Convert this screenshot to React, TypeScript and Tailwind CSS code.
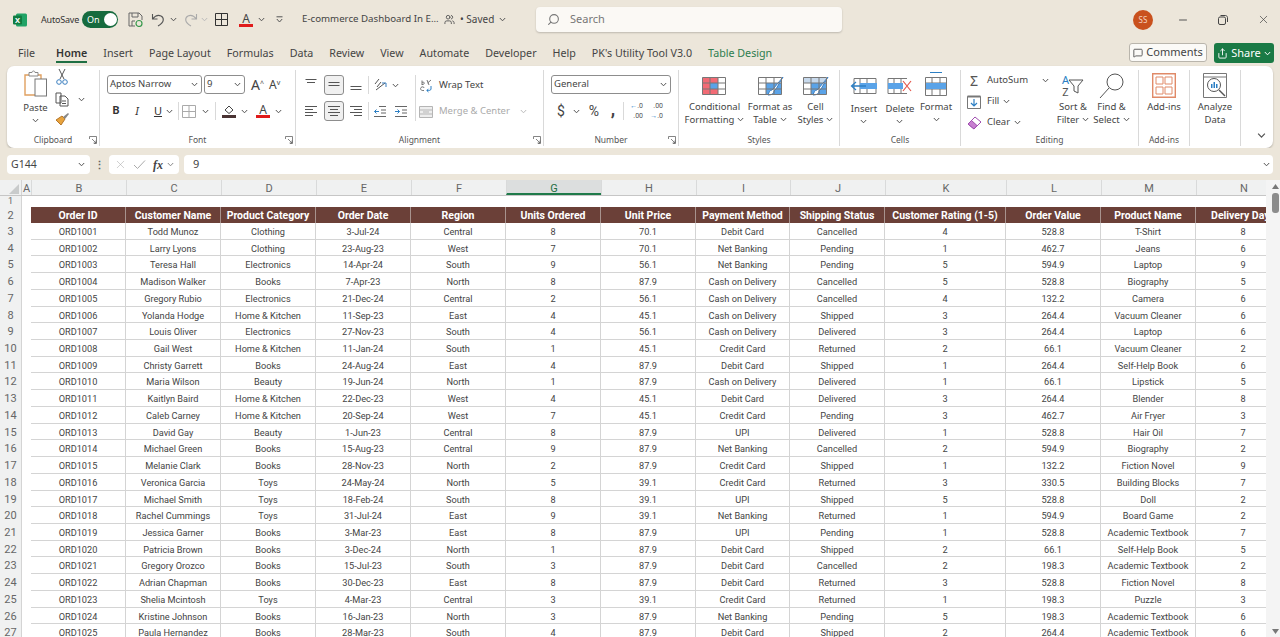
import React from 'react';
import { MessageSquare, Minus, Search, Share, X, Users } from 'lucide-react';

const ui = { fontFamily: '"Noto Sans", sans-serif' };
const sheetFont = { fontFamily: 'Roboto, sans-serif' };

const columns = [
  { name: 'B', title: 'Order ID', w: 'w-[95px]' },
  { name: 'C', title: 'Customer Name', w: 'w-[95px]' },
  { name: 'D', title: 'Product Category', w: 'w-[95px]' },
  { name: 'E', title: 'Order Date', w: 'w-[95px]' },
  { name: 'F', title: 'Region', w: 'w-[95px]' },
  { name: 'G', title: 'Units Ordered', w: 'w-[95px]' },
  { name: 'H', title: 'Unit Price', w: 'w-[95px]' },
  { name: 'I', title: 'Payment Method', w: 'w-[94px]' },
  { name: 'J', title: 'Shipping Status', w: 'w-[95px]' },
  { name: 'K', title: 'Customer Rating (1-5)', w: 'w-[121px]' },
  { name: 'L', title: 'Order Value', w: 'w-[95px]' },
  { name: 'M', title: 'Product Name', w: 'w-[95px]' },
  { name: 'N', title: 'Delivery Days', w: 'w-[95px]' },
];

const rows = [
  'ORD1001|Todd Munoz|Clothing|3-Jul-24|Central|8|70.1|Debit Card|Cancelled|4|528.8|T-Shirt|8',
  'ORD1002|Larry Lyons|Clothing|23-Aug-23|West|7|70.1|Net Banking|Pending|1|462.7|Jeans|6',
  'ORD1003|Teresa Hall|Electronics|14-Apr-24|South|9|56.1|Net Banking|Pending|5|594.9|Laptop|9',
  'ORD1004|Madison Walker|Books|7-Apr-23|North|8|87.9|Cash on Delivery|Cancelled|5|528.8|Biography|5',
  'ORD1005|Gregory Rubio|Electronics|21-Dec-24|Central|2|56.1|Cash on Delivery|Cancelled|4|132.2|Camera|6',
  'ORD1006|Yolanda Hodge|Home & Kitchen|11-Sep-23|East|4|45.1|Cash on Delivery|Shipped|3|264.4|Vacuum Cleaner|6',
  'ORD1007|Louis Oliver|Electronics|27-Nov-23|South|4|56.1|Cash on Delivery|Delivered|3|264.4|Laptop|6',
  'ORD1008|Gail West|Home & Kitchen|11-Jan-24|South|1|45.1|Credit Card|Returned|2|66.1|Vacuum Cleaner|2',
  'ORD1009|Christy Garrett|Books|24-Aug-24|East|4|87.9|Debit Card|Shipped|1|264.4|Self-Help Book|6',
  'ORD1010|Maria Wilson|Beauty|19-Jun-24|North|1|87.9|Cash on Delivery|Delivered|1|66.1|Lipstick|5',
  'ORD1011|Kaitlyn Baird|Home & Kitchen|22-Dec-23|West|4|45.1|Debit Card|Delivered|3|264.4|Blender|8',
  'ORD1012|Caleb Carney|Home & Kitchen|20-Sep-24|West|7|45.1|Credit Card|Pending|3|462.7|Air Fryer|3',
  'ORD1013|David Gay|Beauty|1-Jun-23|Central|8|87.9|UPI|Delivered|1|528.8|Hair Oil|7',
  'ORD1014|Michael Green|Books|15-Aug-23|Central|9|87.9|Net Banking|Cancelled|2|594.9|Biography|2',
  'ORD1015|Melanie Clark|Books|28-Nov-23|North|2|87.9|Credit Card|Shipped|1|132.2|Fiction Novel|9',
  'ORD1016|Veronica Garcia|Toys|24-May-24|North|5|39.1|Credit Card|Returned|3|330.5|Building Blocks|7',
  'ORD1017|Michael Smith|Toys|18-Feb-24|South|8|39.1|UPI|Shipped|5|528.8|Doll|2',
  'ORD1018|Rachel Cummings|Toys|31-Jul-24|East|9|39.1|Net Banking|Returned|1|594.9|Board Game|2',
  'ORD1019|Jessica Garner|Books|3-Mar-23|East|8|87.9|UPI|Pending|1|528.8|Academic Textbook|7',
  'ORD1020|Patricia Brown|Books|3-Dec-24|North|1|87.9|Debit Card|Shipped|2|66.1|Self-Help Book|5',
  'ORD1021|Gregory Orozco|Books|15-Jul-23|South|3|87.9|Debit Card|Cancelled|2|198.3|Academic Textbook|2',
  'ORD1022|Adrian Chapman|Books|30-Dec-23|East|8|87.9|Debit Card|Returned|3|528.8|Fiction Novel|8',
  'ORD1023|Shelia Mcintosh|Toys|4-Mar-23|Central|3|39.1|Credit Card|Returned|1|198.3|Puzzle|3',
  'ORD1024|Kristine Johnson|Books|16-Jan-23|North|3|87.9|Net Banking|Pending|5|198.3|Academic Textbook|6',
  'ORD1025|Paula Hernandez|Books|28-Mar-23|South|4|87.9|Debit Card|Shipped|2|264.4|Academic Textbook|6',
].map((r) => r.split('|'));

const tabs = ['File', 'Home', 'Insert', 'Page Layout', 'Formulas', 'Data', 'Review', 'View', 'Automate', 'Developer', 'Help', "PK's Utility Tool V3.0", 'Table Design'];

const Chev = ({ color = '#555', className = '' }: { color?: string; className?: string }) => (
  <svg width="7" height="5" viewBox="0 0 7 5" className={'shrink-0 ' + className}>
    <path d="M.8 1 3.5 3.8 6.2 1" fill="none" stroke={color} strokeWidth="1" />
  </svg>
);

// stacked text lines, used for the alignment buttons
const Lines = ({ widths, align = 'left', top = 1 }: { widths: number[]; align?: string; top?: number }) => (
  <svg width="14" height="14" viewBox="0 0 14 14">
    {widths.map((w, i) => {
      const x = align === 'left' ? 1 : align === 'right' ? 13 - w : 7 - w / 2;
      return <rect key={i} x={x} y={top + i * 3} width={w} height="1" fill="#555" />;
    })}
  </svg>
);

const Launcher = () => (
  <svg width="8" height="8" viewBox="0 0 8 8" className="absolute right-[2px] bottom-[2px]">
    <path d="M.5 3V.5H7.5V7.5H5M3 3 7 7M7 4.5V7H4.5" fill="none" stroke="#666" strokeWidth=".8" />
  </svg>
);

const Group = ({ w, label, launcher, border = true, children }: { w: string; label?: string; launcher?: boolean; border?: boolean; children: React.ReactNode }) => (
  <div className={'relative flex flex-col h-full shrink-0 ' + w + (border ? ' border-r border-[#d9d9d9]' : '')}>
    <div className="flex-1 min-h-0 flex">{children}</div>
    <div className="h-[13px] leading-[13px] text-center text-[8.5px] text-[#555]">{label}</div>
    {launcher && <Launcher />}
  </div>
);

const TableIcon = ({ children }: { children?: React.ReactNode }) => (
  <svg width="27" height="24" viewBox="0 0 27 24">
    {children}
    <path d="M1.5 3.5H24.5V20.5H1.5ZM1.5 9H24.5M1.5 15H24.5M9 3.5V20.5M17 3.5V20.5" fill="none" stroke="#777" strokeWidth="1" />
  </svg>
);

const Brush = () => (
  <path d="M26 3 17 14l-2 2c-2 0-3 2-4 5 3 0 6-1 6-4l2-2Z" fill="#fff" stroke="#3f7fc0" strokeWidth="1" />
);

const BigButton = ({ w, icon, lines }: { w: string; icon: React.ReactNode; lines: React.ReactNode[] }) => (
  <div className={'flex flex-col items-center shrink-0 pt-[1px] ' + w}>
    <div className="h-[29px] flex items-center">{icon}</div>
    <div className="text-[9.5px] leading-[13px] text-[#444] text-center whitespace-nowrap">
      {lines.map((l, i) => (
        <div key={i} className="flex items-center justify-center gap-[3px]">{l}</div>
      ))}
    </div>
  </div>
);

const SmallRow = ({ icon, text, chev, grey }: { icon: React.ReactNode; text: string; chev?: boolean; grey?: boolean }) => (
  <div className={'flex items-center h-[21px] text-[9.5px] whitespace-nowrap ' + (grey ? 'text-[#aaa]' : 'text-[#444]')}>
    <span className="w-[18px] flex justify-center shrink-0">{icon}</span>
    <span className="ml-[4px]">{text}</span>
    {chev && <Chev className="ml-[4px]" />}
  </div>
);

const Ribbon = () => (
  <div className="mx-[7px] h-[82px] bg-white rounded-[7px] shadow-[0_1px_2px_rgba(0,0,0,0.25)] flex pt-[4px] pb-[2px] shrink-0" style={ui}>
    <Group w="w-[93px]" label="Clipboard" launcher>
      <div className="w-[27px] ml-[15px] flex flex-col items-center">
        <svg width="24" height="28" viewBox="0 0 24 28">
          <path d="M1 5H17V25H1Z" fill="none" stroke="#e0a060" strokeWidth="1.4" />
          <path d="M5 2.5H8C8 .5 11 .5 11 2.5H14V6H5Z" fill="#fff" stroke="#888" />
          <rect x="11" y="9" width="11.5" height="17" fill="#fff" stroke="#777" />
        </svg>
        <span className="text-[9.5px] leading-[13px] mt-[3px] text-[#444]">Paste</span>
        <Chev className="mt-[4px]" />
      </div>
      <div className="w-[16px] ml-[5px] flex flex-col items-center">
        <svg width="12" height="17" viewBox="0 0 12 17" className="mt-[-1px]">
          <path d="M3 0 8 10M9 0 4 10" stroke="#555" fill="none" />
          <circle cx="3" cy="13" r="2.3" fill="none" stroke="#3a7ebf" />
          <circle cx="9" cy="13" r="2.3" fill="none" stroke="#3a7ebf" />
        </svg>
        <svg width="14" height="15" viewBox="0 0 14 15" className="mt-[6px]">
          <path d="M1 1H6V11H1ZM5 4H10L13 7V14H5Z" fill="#fff" stroke="#555" />
          <path d="M7 9H11M7 11.5H11" stroke="#555" />
        </svg>
        <svg width="15" height="14" viewBox="0 0 15 14" className="mt-[5px]">
          <path d="M1 8 6 13 10 7 7 4Z" fill="#e8a33d" stroke="#b5762a" />
          <path d="M8 5 13 1 14 2 10 7Z" fill="#888" />
        </svg>
      </div>
      <Chev className="ml-[8px] mt-[27px]" />
    </Group>

    <Group w="w-[196px]" label="Font" launcher>
      <div className="pl-[7px] pt-[5px] flex flex-col">
        <div className="flex items-center">
          <div className="w-[95px] h-[19px] border border-[#8d8d8d] rounded-[3px] flex items-center justify-between px-[2px] text-[9.5px] text-[#444]">
            <span>Aptos Narrow</span><Chev className="mr-[1px]" />
          </div>
          <div className="w-[41px] h-[19px] ml-[2px] border border-[#8d8d8d] rounded-[3px] flex items-center justify-between px-[2px] text-[9.5px] text-[#444]">
            <span>9</span><Chev className="mr-[1px]" />
          </div>
          <span className="ml-[6px] text-[14px] leading-none text-[#444]">A<sup className="text-[7px]">^</sup></span>
          <span className="ml-[5px] text-[12px] leading-none text-[#444]">A<sup className="text-[7px]">v</sup></span>
        </div>
        <div className="flex items-center mt-[7px] h-[20px] text-[#333]">
          <span className="w-[10px] ml-[4px] text-[11px] font-bold text-center" style={sheetFont}>B</span>
          <span className="w-[10px] ml-[11px] text-[11px] italic text-center">I</span>
          <span className="w-[10px] ml-[11px] text-[11px] underline text-center">U</span>
          <Chev className="ml-[3px]" />
          <div className="w-px h-[18px] bg-[#d9d9d9] ml-[5px]" />
          <svg width="14" height="13" viewBox="0 0 14 13" className="ml-[3px]">
            <path d="M.5.5H13.5V12.5H.5ZM7 .5V12.5M.5 6.5H13.5" fill="none" stroke="#aaa" />
          </svg>
          <Chev className="ml-[6px]" />
          <div className="w-px h-[18px] bg-[#d9d9d9] ml-[6px]" />
          <svg width="14" height="14" viewBox="0 0 14 14" className="ml-[6px]">
            <path d="M3 6 7 2 11 6 7 9.5Z" fill="none" stroke="#444" />
            <rect y="11" width="14" height="3" fill="#4a3333" />
          </svg>
          <Chev className="ml-[5px]" />
          <div className="ml-[8px] w-[14px] flex flex-col items-center leading-none">
            <span className="text-[12px] leading-[11px] text-[#444]">A</span>
            <span className="w-[14px] h-[3px] bg-[#e01b1b]" />
          </div>
          <Chev className="ml-[5px]" />
        </div>
      </div>
    </Group>

    <Group w="w-[248px]" label="Alignment" launcher>
      <div className="pl-[8px] pt-[5px] flex flex-col">
        <div className="flex items-center h-[20px]">
          <span className="w-[14px]"><Lines widths={[11, 8]} align="center" /></span>
          <span className="ml-[6px] w-[20px] h-[20px] rounded-[3px] border border-[#8d8d8d] bg-[#f0f0f0] flex items-center justify-center"><Lines widths={[11, 11]} align="center" top={4} /></span>
          <span className="ml-[5px] w-[14px]"><Lines widths={[11, 11]} align="center" top={8} /></span>
          <div className="w-px h-[18px] bg-[#d9d9d9] ml-[5px]" />
          <svg width="15" height="14" viewBox="0 0 15 14" className="ml-[4px]">
            <path d="M2 6 6 1M4 9 8 4M3 12 12 5" stroke="#555" fill="none" />
            <path d="M9 5H13V9" stroke="#3a7ebf" fill="none" />
          </svg>
          <Chev className="ml-[4px]" />
        </div>
        <div className="flex items-center h-[20px] mt-[6px]">
          <span className="w-[14px]"><Lines widths={[12, 8, 12, 8]} top={2} /></span>
          <span className="ml-[6px] w-[20px] h-[20px] rounded-[3px] border border-[#8d8d8d] bg-[#f0f0f0] flex items-center justify-center"><Lines widths={[12, 8, 12, 8]} align="center" top={2} /></span>
          <span className="ml-[5px] w-[14px]"><Lines widths={[12, 8, 12, 8]} align="right" top={2} /></span>
          <div className="w-px h-[18px] bg-[#d9d9d9] ml-[5px]" />
          <svg width="14" height="13" viewBox="0 0 14 13" className="ml-[4px]">
            <path d="M6 1.5H13M8 5H13M8 8H13M1 11.5H13" stroke="#666" fill="none" />
            <path d="M6 6.5H1.5M3.5 4.5 1.5 6.5 3.5 8.5" stroke="#2c7fc4" fill="none" />
          </svg>
          <svg width="14" height="13" viewBox="0 0 14 13" className="ml-[7px]">
            <path d="M1 1.5H13M8 5H13M8 8H13M1 11.5H13" stroke="#666" fill="none" />
            <path d="M1 6.5H5.5M3.5 4.5 5.5 6.5 3.5 8.5" stroke="#2c7fc4" fill="none" />
          </svg>
        </div>
      </div>
      <div className="w-px h-[46px] bg-[#d9d9d9] ml-[7px] mt-[5px]" />
      <div className="ml-[1px] pt-[5px] flex flex-col">
        <SmallRow
          icon={
            <svg width="14" height="14" viewBox="0 0 14 14">
              <path d="M3 1.5V6M3 3.5C6 2 6 6 3 5.5M8 1 10 6M12 1 8.6 4" fill="none" stroke="#666" strokeWidth=".9" />
              <path d="M5 9C5 7.5 3 7.5 2 8.5S1.5 12 5 11.5" fill="none" stroke="#666" strokeWidth=".9" />
              <path d="M12 7V10C12 11.5 10 11.5 8 11.5M9.5 9.8 7.8 11.5 9.5 13" fill="none" stroke="#2c7fc4" />
            </svg>
          }
          text="Wrap Text"
        />
        <div className="mt-[5px] flex items-center">
          <SmallRow
            grey
            icon={
              <svg width="14" height="12" viewBox="0 0 14 12">
                <path d="M.5.5H13.5V11.5H.5ZM.5 4H13.5M.5 8H13.5M4 6H10" fill="#eee" stroke="#b5b5b5" />
              </svg>
            }
            text="Merge & Center"
          />
          <Chev className="ml-[10px]" color="#bbb" />
        </div>
      </div>
    </Group>

    <Group w="w-[135px]" label="Number" launcher>
      <div className="pl-[7px] pt-[5px] flex flex-col">
        <div className="w-[120px] h-[19px] border border-[#8d8d8d] rounded-[3px] flex items-center justify-between px-[2px] text-[9.5px] text-[#444]">
          <span>General</span><Chev className="mr-[1px]" />
        </div>
        <div className="flex items-center h-[20px] mt-[7px] text-[#444]">
          <span className="w-[10px] ml-[5px] text-[14px] text-center leading-none" style={sheetFont}>$</span>
          <Chev className="ml-[7px]" />
          <span className="ml-[6px] w-[16px] text-[14px] leading-none text-center" style={sheetFont}>%</span>
          <span className="ml-[7px] w-[8px] text-[18px] font-bold leading-none text-center pb-[5px]" style={sheetFont}>,</span>
          <div className="w-px h-[18px] bg-[#d9d9d9] ml-[6px]" />
          <span className="ml-[5px] w-[14px] text-[7px] leading-[10px] text-[#555] text-right whitespace-nowrap" style={sheetFont}><span className="text-[#2c7fc4]">←</span>.0<br />.00</span>
          <span className="ml-[6px] w-[14px] text-[7px] leading-[10px] text-[#555] text-right whitespace-nowrap" style={sheetFont}>.00<br /><span className="text-[#2c7fc4]">→</span>.0</span>
        </div>
      </div>
    </Group>

    <Group w="w-[161px]" label="Styles">
      <BigButton
        w="w-[71px]"
        icon={
          <TableIcon>
            <rect x="1.5" y="3.5" width="15.5" height="5.5" fill="#f26b75" />
            <rect x="9" y="9" width="8" height="6" fill="#5aa3e8" />
            <rect x="1.5" y="15" width="15.5" height="5.5" fill="#f26b75" />
            <rect x="1.5" y="9" width="7.5" height="6" fill="#f26b75" />
          </TableIcon>
        }
        lines={['Conditional', <>Formatting <Chev /></>]}
      />
      <BigButton
        w="w-[44px] ml-[-2px]"
        icon={
          <TableIcon>
            <rect x="9" y="9" width="15.5" height="11.5" fill="#5aa3e8" />
            <Brush />
          </TableIcon>
        }
        lines={['Format as', <>Table <Chev /></>]}
      />
      <BigButton
        w="w-[37px] ml-[5px]"
        icon={
          <TableIcon>
            <rect x="1.5" y="3.5" width="23" height="5.5" fill="#c7d9ec" />
            <rect x="9" y="9" width="15.5" height="11.5" fill="#5aa3e8" />
            <Brush />
          </TableIcon>
        }
        lines={['Cell', <>Styles <Chev /></>]}
      />
    </Group>

    <Group w="w-[121px]" label="Cells">
      <BigButton
        w="w-[36px] ml-[6px]"
        icon={
          <svg width="28" height="20" viewBox="0 0 28 20">
            <path d="M4 2.5H26V17.5H4ZM10 2.5V17.5M17 2.5V17.5" fill="none" stroke="#777" />
            <rect x="10" y="7" width="17" height="6" fill="#5aa3e8" />
            <path d="M16 10H2M6 6 1.5 10 6 14" fill="none" stroke="#2c7fc4" strokeWidth="1.3" />
          </svg>
        }
        lines={[<span className="pt-[2px]">Insert</span>, <Chev className="mt-[4px]" />]}
      />
      <BigButton
        w="w-[36px]"
        icon={
          <svg width="26" height="20" viewBox="0 0 26 20">
            <path d="M1 2.5H20M1 17.5H20M7 2.5V17.5M14 2.5V17.5M1 2.5V17.5" fill="none" stroke="#777" />
            <rect x="1" y="7" width="15" height="6" fill="#5aa3e8" />
            <path d="M16 5 24 15M24 5 16 15" stroke="#e4574c" strokeWidth="1.2" />
          </svg>
        }
        lines={[<span className="pt-[2px]">Delete</span>, <Chev className="mt-[4px]" />]}
      />
      <BigButton
        w="w-[36px]"
        icon={
          <svg width="26" height="26" viewBox="0 0 26 26" className="mt-[-4px]">
            <path d="M7 1.5H19" stroke="#2c7fc4" />
            <path d="M2.5 6.5H23.5V24.5H2.5ZM2.5 12H23.5M2.5 18H23.5M9 6.5V24.5M17 6.5V24.5" fill="none" stroke="#777" />
            <rect x="3" y="12" width="20" height="6" fill="#5aa3e8" />
          </svg>
        }
        lines={['Format', <Chev className="mt-[4px]" />]}
      />
    </Group>

    <Group w="w-[178px]" label="Editing">
      <div className="w-[92px] ml-[4px] flex flex-col">
        <div className="flex items-center">
          <SmallRow icon={<span className="text-[14px] leading-none text-[#555]">Σ</span>} text="AutoSum" />
          <Chev className="ml-[14px]" />
        </div>
        <SmallRow
          chev
          icon={
            <svg width="14" height="14" viewBox="0 0 14 14">
              <path d="M.5 1.5H13.5V13.5H.5Z" fill="#fff" stroke="#777" />
              <path d="M.5 1.5H13.5" stroke="#777" strokeWidth="2" />
              <path d="M7 4V11M4 8 7 11 10 8" fill="none" stroke="#2c7fc4" strokeWidth="1.2" />
            </svg>
          }
          text="Fill"
        />
        <SmallRow
          chev
          icon={
            <svg width="15" height="14" viewBox="0 0 15 14">
              <path d="M1 8 8 1 14 6 7 13Z" fill="#fff" stroke="#a04fb0" />
              <path d="M1 8 4.5 4.5 10 9.5 7 13Z" fill="#c77fd0" stroke="#a04fb0" />
            </svg>
          }
          text="Clear"
        />
      </div>
      <BigButton
        w="w-[38px] ml-[-3px]"
        icon={
          <div className="flex items-center">
            <div className="flex flex-col items-center text-[11px] leading-[12px] mr-[-1px]">
              <span className="text-[#2c7fc4]">A</span>
              <span className="text-[#555]">Z</span>
            </div>
            <svg width="16" height="16" viewBox="0 0 16 16">
              <path d="M1 2H15L10 8V15L6 13V8Z" fill="#fff" stroke="#555" />
            </svg>
          </div>
        }
        lines={['Sort &', <>Filter <Chev /></>]}
      />
      <BigButton
        w="w-[39px]"
        icon={
          <svg width="26" height="26" viewBox="0 0 26 26">
            <circle cx="16" cy="9" r="8" fill="#fff" stroke="#555" />
            <path d="M10 15 1 25" stroke="#555" />
          </svg>
        }
        lines={['Find &', <>Select <Chev /></>]}
      />
    </Group>

    <Group w="w-[51px]" label="Add-ins">
      <BigButton
        w="w-[50px]"
        icon={
          <svg width="24" height="25" viewBox="0 0 24 25">
            <path d="M.7.7H23.3V24.3H.7Z" fill="#fff" stroke="#e08a68" strokeWidth="1.4" />
            <path d="M4 4H11V11H4ZM13 4H20V11H13ZM4 14H11V21H4ZM13 14H20V21H13Z" fill="none" stroke="#e08a68" />
          </svg>
        }
        lines={['Add-ins']}
      />
    </Group>

    <Group w="w-[51px]">
      <BigButton
        w="w-[50px]"
        icon={
          <svg width="24" height="25" viewBox="0 0 24 25">
            <path d="M.5.5H23.5V24.5H.5ZM.5 4H23.5" fill="#fff" stroke="#777" />
            <circle cx="11" cy="12" r="6.5" fill="#fff" stroke="#555" />
            <path d="M8 11H9.5V15H8ZM10.5 9H12V15H10.5ZM13 11H14.5V15H13Z" fill="#2c7fc4" />
            <path d="M16 17 22 23" stroke="#555" strokeWidth="1.4" />
          </svg>
        }
        lines={['Analyze', 'Data']}
      />
    </Group>

    <div className="flex-1 flex items-end justify-end pr-[8px] pb-[8px]">
      <Chev className="scale-125" />
    </div>
  </div>
);

const TitleBar = () => (
  <div className="h-[39px] flex items-center shrink-0 text-[#444]" style={ui}>
    <div className="w-[536px] shrink-0 flex items-center">
      <svg width="14" height="14" viewBox="0 0 14 14" className="ml-[13px] shrink-0">
        <rect x="3" y="0.5" width="11" height="13" rx="1.5" fill="#21a366" />
        <rect x="0" y="2.5" width="9" height="9" rx="1" fill="#107c41" />
        <text x="2" y="9.5" fontSize="7.5" fontWeight="700" fill="#fff" style={ui}>X</text>
      </svg>
      <span className="ml-[14px] w-[37px] text-[9px] tracking-[-0.2px] whitespace-nowrap text-[#333]">AutoSave</span>
      <div className="ml-[4px] w-[36px] h-[17px] rounded-full bg-[#166b3e] flex items-center justify-between pl-[5px] pr-[1.5px]">
        <span className="text-[9px] text-white">On</span>
        <span className="w-[13px] h-[13px] rounded-full bg-white" />
      </div>
      <svg width="15" height="15" viewBox="0 0 15 15" className="ml-[10px]">
        <path d="M1 1H11L14 4V8M7 14H1V1M4 1V5H10V1M4 14V9H7" fill="none" stroke="#666" />
        <circle cx="11" cy="11.5" r="3" fill="none" stroke="#3a9a4e" strokeWidth="1.2" />
      </svg>
      <svg width="15" height="14" viewBox="0 0 15 14" className="ml-[8px]">
        <path d="M1.5 1V6H6.5M1.5 6C4 3 7 1.5 10 3S14 9 7 13" fill="none" stroke="#555" strokeWidth="1.1" />
      </svg>
      <Chev className="ml-[4px]" />
      <svg width="15" height="14" viewBox="0 0 15 14" className="ml-[6px]">
        <path d="M13.5 1V6H8.5M13.5 6C11 3 8 1.5 5 3S1 9 8 13" fill="none" stroke="#aaa" strokeWidth="1.1" />
      </svg>
      <Chev className="ml-[3px]" color="#bbb" />
      <svg width="13" height="13" viewBox="0 0 13 13" className="ml-[7px]">
        <path d="M.5.5H12.5V12.5H.5ZM6.5.5V12.5M.5 6.5H12.5" fill="none" stroke="#333" />
      </svg>
      <div className="ml-[11px] w-[14px] flex flex-col items-center">
        <span className="text-[12px] leading-[11px] text-[#444]">A</span>
        <span className="w-[14px] h-[3px] bg-[#e01b1b]" />
      </div>
      <Chev className="ml-[5px]" />
      <svg width="7" height="7" viewBox="0 0 7 7" className="ml-[11px]">
        <path d="M.5.8H6.5M.8 3 3.5 6 6.2 3" fill="none" stroke="#555" />
      </svg>
      <span className="ml-[19px] w-[138px] text-[9.7px] whitespace-nowrap">E-commerce Dashboard In E...</span>
      <Users size={11} className="ml-[4px] text-[#555]" />
      <span className="ml-[5px] text-[10px] whitespace-nowrap">• Saved</span>
      <Chev className="ml-[5px]" />
    </div>
    <div className="w-[306px] h-[25px] mt-[-1px] bg-[#fbf9f5] rounded-[4px] shadow-[0_1px_2px_rgba(0,0,0,0.2)] flex items-center pl-[11px] text-[11px] text-[#777]">
      <Search size={13} className="-scale-x-100" />
      <span className="ml-[10px]">Search</span>
    </div>
    <div className="ml-[291px] w-[20px] h-[20px] rounded-full bg-[#c9511d] flex items-center justify-center text-[8px] text-[#f5d5c0]">SS</div>
    <Minus size={12} className="ml-[24px] text-[#555]" />
    <svg width="10" height="10" viewBox="0 0 10 10" className="ml-[29px]">
      <rect x=".5" y="2" width="7" height="7.5" rx="1.5" fill="none" stroke="#444" />
      <path d="M2.5 .5H7.5C8.5 .5 9.5 1.5 9.5 2.5V7" fill="none" stroke="#444" />
    </svg>
    <X size={13} strokeWidth={1.3} className="ml-[29px] text-[#444]" />
  </div>
);

const TabBar = () => (
  <div className="h-[27px] flex items-start shrink-0 pl-[18px] relative" style={ui}>
    <div className="flex gap-[16px] text-[10.7px] leading-[16px] pt-[6px] text-[#444] whitespace-nowrap">
      {tabs.map((t) => (
        <span key={t} className={'relative ' + (t === 'Home' ? 'ml-[5px] font-semibold text-[#333]' : t === 'Table Design' ? 'text-[#2e7d4f]' : '')}>
          {t}
          {t === 'Home' && <span className="absolute left-0 right-0 top-[16px] h-[2px] bg-[#1f6f43]" />}
        </span>
      ))}
    </div>
    <div className="ml-auto mr-[6px] mt-[4px] flex gap-[7px]">
      <div className="w-[78px] h-[19px] bg-[#fbfaf7] border border-[#b9b5ac] rounded-[3px] flex items-center justify-center gap-[3px] text-[11px] text-[#444]">
        <MessageSquare size={10} /> Comments
      </div>
      <div className="w-[60px] h-[20px] bg-[#1a7a45] rounded-[3px] flex items-center justify-center gap-[3px] text-[11px] text-white">
        <Share size={11} /> Share <Chev color="#fff" />
      </div>
    </div>
  </div>
);

const FormulaBar = () => (
  <div className="h-[32px] flex shrink-0 px-[7px] pt-[7px] pb-[5px] bg-[#ece6da]" style={ui}>
    <div className="w-[83px] h-[19px] bg-white rounded-[4px] flex items-center justify-between pl-[4px] pr-[5px] text-[10.5px] text-[#444]">
      <span>G144</span><Chev />
    </div>
    <div className="w-[19px] flex items-center justify-center text-[#666] text-[11px] font-bold">⋮</div>
    <div className="w-[70px] h-[19px] bg-white rounded-[4px] flex items-center pl-[5px]">
      <X size={13} strokeWidth={1} className="text-[#aaa]" />
      <svg width="13" height="11" viewBox="0 0 13 11" className="ml-[6px]">
        <path d="M1 6 4.5 9.5 12 1.5" fill="none" stroke="#aaa" />
      </svg>
      <span className="ml-[7px] text-[12px] italic font-bold text-[#444]" style={{ fontFamily: '"Liberation Serif", serif' }}>fx</span>
      <Chev className="ml-[4px]" color="#888" />
    </div>
    <div className="ml-[5px] flex-1 h-[19px] bg-white rounded-[4px] flex items-center justify-between pl-[9px] pr-[3px] text-[11px] text-[#444]">
      <span>9</span><Chev />
    </div>
  </div>
);

const Sheet = () => (
  <div className="flex-1 min-h-0 flex bg-white overflow-hidden" style={sheetFont}>
    <div className="flex-1 min-w-0 overflow-hidden">
      <div className="h-[15px] flex bg-[#f0f1f1] border-b border-[#c6c6c6] box-content text-[11px] leading-[17px] text-[#666] whitespace-nowrap">
        <div className="w-[22px] shrink-0 border-r border-[#d4d4d4] flex items-end justify-end p-[1px] pr-[2px]">
          <svg width="10" height="10" viewBox="0 0 10 10"><path d="M10 0V10H0Z" fill="#c9cbcb" /></svg>
        </div>
        <div className="w-[9px] shrink-0 text-center">A</div>
        {columns.map((c) => (
          <div
            key={c.name}
            className={c.w + ' shrink-0 text-center border-l border-[#d9dada] ' + (c.name === 'G' ? 'bg-[#dcdede] border-b-2 border-b-[#1f7a4a] text-[#1f6f43]' : '')}
          >
            {c.name}
          </div>
        ))}
      </div>
      <div className="h-[11px] flex">
        <div className="w-[22px] shrink-0 bg-[#f0f1f1] border-r border-[#d4d4d4] text-center text-[9px] leading-[11px] text-[#666]">1</div>
      </div>
      <div className="h-[16px] flex">
        <div className="w-[22px] shrink-0 bg-[#f0f1f1] border-r border-[#d4d4d4] text-center text-[11px] leading-[17px] text-[#666]">2</div>
        <div className="w-[9px] shrink-0" />
        {columns.map((c) => (
          <div key={c.name} className={c.w + ' shrink-0 bg-[#6b4038] border-r border-[#a8938e] text-white font-bold text-[10.5px] leading-[17px] text-center whitespace-nowrap overflow-hidden'}>
            {c.title}
          </div>
        ))}
      </div>
      {rows.map((r, i) => (
        <div key={r[0]} className="h-[16.72px] flex">
          <div className="w-[22px] shrink-0 bg-[#f0f1f1] border-r border-[#d4d4d4] text-center text-[11px] leading-[18px] text-[#666]">{i + 3}</div>
          <div className="w-[9px] shrink-0" />
          {r.map((v, j) => (
            <div key={j} className={columns[j].w + ' shrink-0 border-r border-b border-[#d4d4d4] text-[9.2px] leading-[17.5px] text-center text-[#444] whitespace-nowrap'}>
              {v}
            </div>
          ))}
        </div>
      ))}
    </div>
    <div className="w-[14px] shrink-0 bg-[#f4f4f4] flex flex-col items-center justify-between pt-[4px] pb-[3px] pl-[4px]">
      <div className="flex flex-col items-center">
        <svg width="7" height="5" viewBox="0 0 7 5"><path d="M3.5 0 7 5H0Z" fill="#777" /></svg>
        <div className="mt-[4px] w-[7px] h-[20px] rounded-[3px] bg-[#8c8c8c]" />
      </div>
      <svg width="7" height="5" viewBox="0 0 7 5"><path d="M0 0H7L3.5 5Z" fill="#777" /></svg>
    </div>
  </div>
);

export default function App() {
  return (
    <div className="w-[1280px] h-[637px] overflow-hidden flex flex-col bg-[#ece6da]">
      <TitleBar />
      <TabBar />
      <Ribbon />
      <FormulaBar />
      <Sheet />
    </div>
  );
}
